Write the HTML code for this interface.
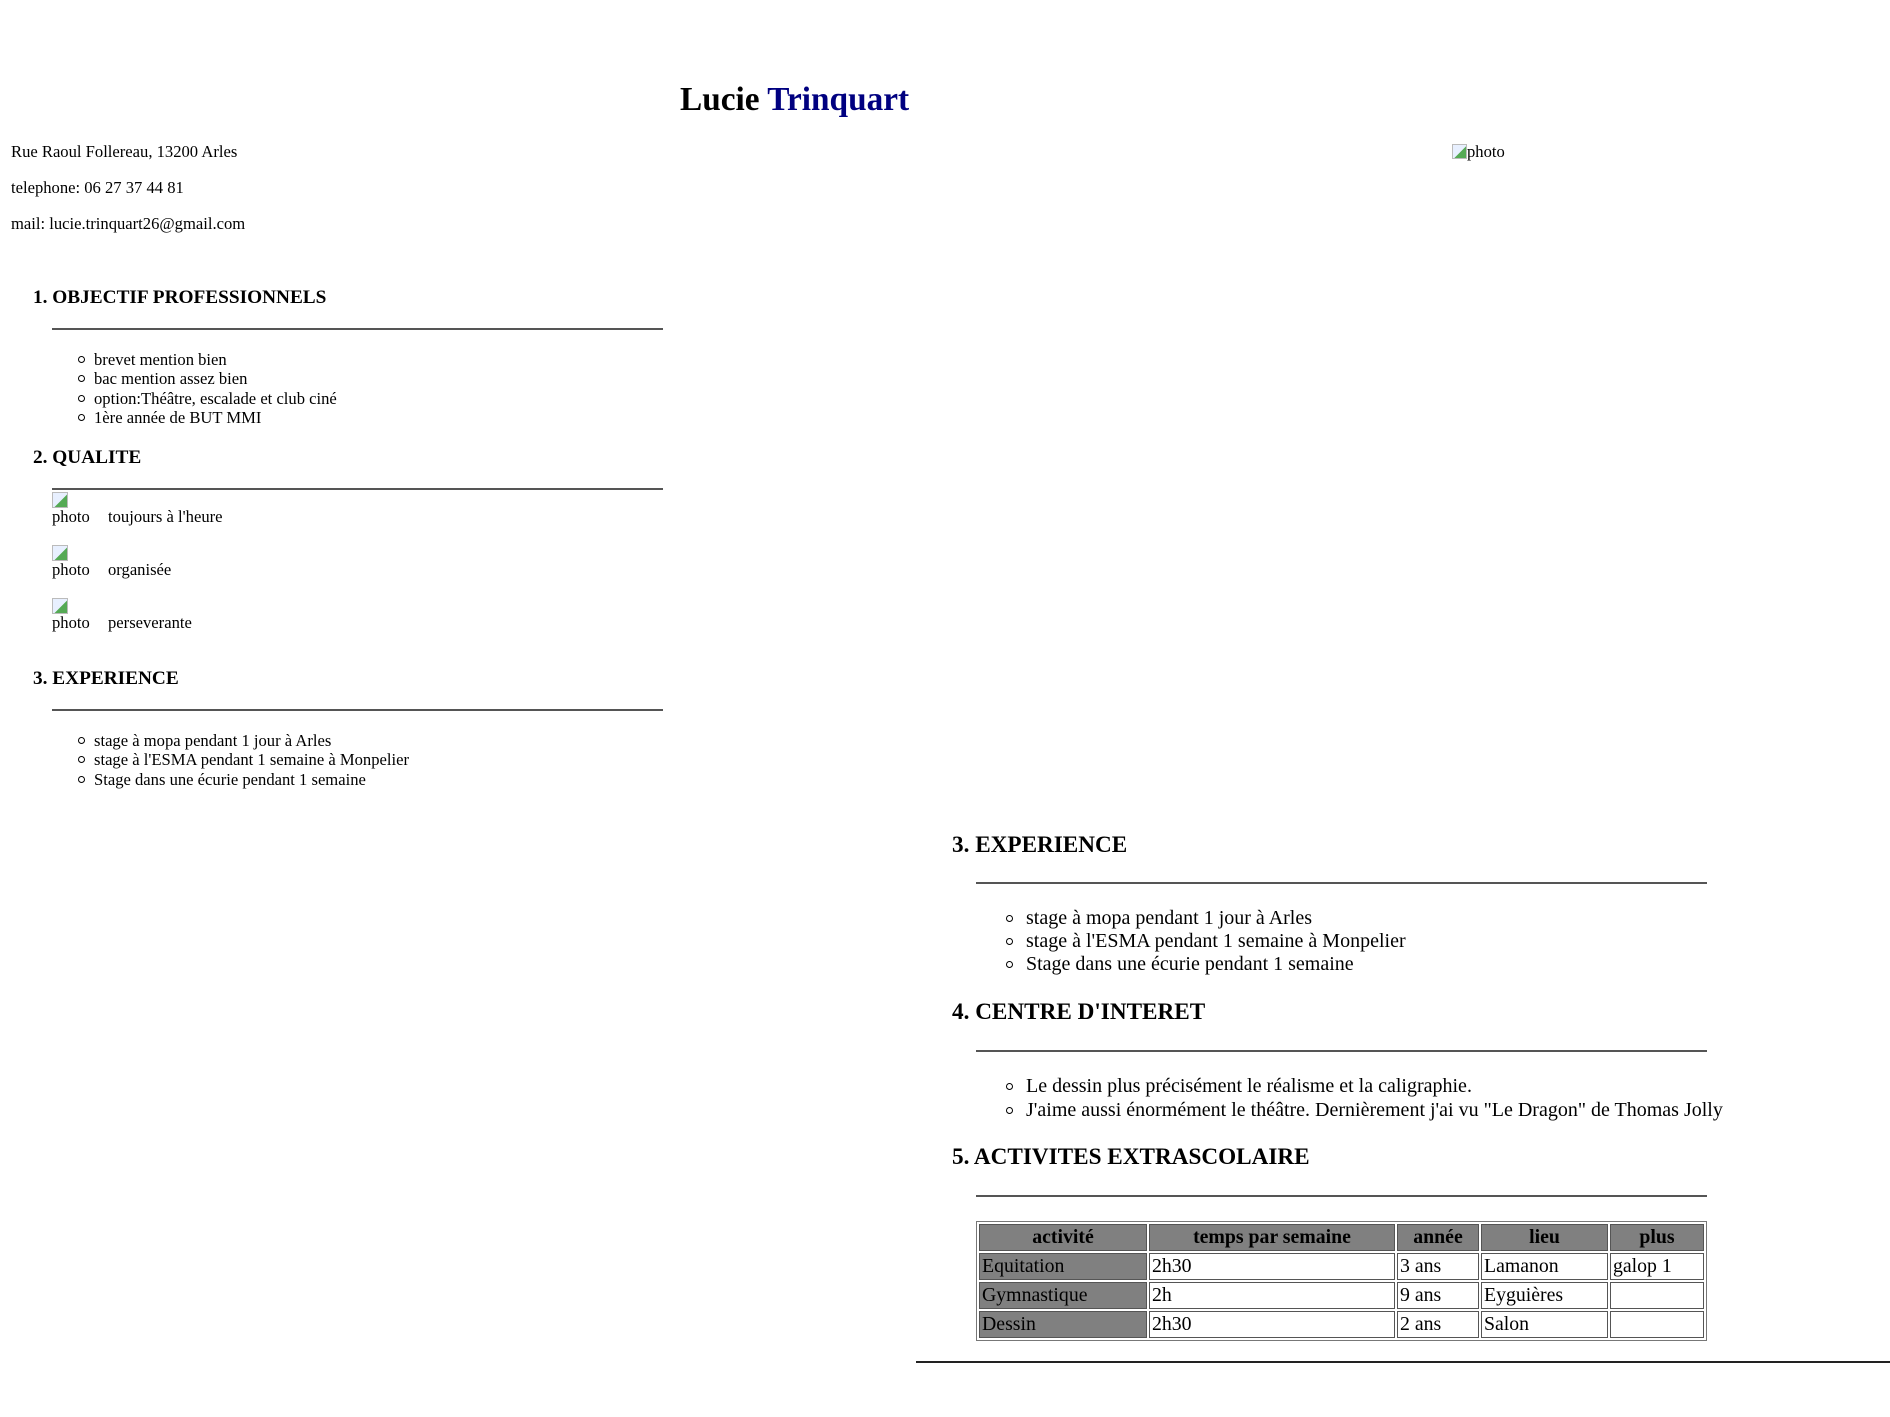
<!DOCTYPE html>
<html><head><meta charset="utf-8"><style>
body{margin:0;width:1890px;height:1417px;background:#fff;font-family:"Liberation Serif",serif;color:#000;position:relative;overflow:hidden}
.a{position:absolute;white-space:nowrap}
.s{font-size:16.6px;line-height:19.3px}
.h{font-size:19.3px;font-weight:bold}
.H{font-size:23.2px;font-weight:bold}
.r{font-size:20px;line-height:23px}
.hr{position:absolute;height:2px;background:#555}
.b{position:absolute;width:5px;height:5px;border:1.2px solid #000;border-radius:50%}
.ic{position:absolute;width:14px;height:14px;border:1px solid #bbb;background:linear-gradient(135deg,#e8f0ff 55%,#5a5 56%)}
table{position:absolute;left:976px;top:1221px;width:731px;border:1px solid #777;border-collapse:separate;border-spacing:2px;font-size:19.8px}
td,th{border:1px solid #555;padding:0 2px;height:25px;text-align:left}
th{background:#808080;text-align:center}
td.g{background:#808080}
</style></head><body>
<div class="a" style="left:680px;top:81px;font-size:33.3px;font-weight:bold">Lucie <span style="color:#000080">Trinquart</span></div>
<div class="a s" style="left:11px;top:142px">Rue Raoul Follereau, 13200 Arles</div>
<div class="a s" style="left:11px;top:178px">telephone: 06 27 37 44 81</div>
<div class="a s" style="left:11px;top:214px">mail: lucie.trinquart26@gmail.com</div>
<div class="a s" style="left:1452px;top:142px"><span class="ic" style="position:relative;display:inline-block;width:13px;height:13px;vertical-align:-2px"></span>photo</div>

<div class="a h" style="left:33px;top:287px">1. OBJECTIF PROFESSIONNELS</div>
<div class="hr" style="left:52px;top:328px;width:611px"></div>
<div class="b" style="left:78px;top:356px"></div><div class="a s" style="left:94px;top:350px">brevet mention bien</div>
<div class="b" style="left:78px;top:375px"></div><div class="a s" style="left:94px;top:369px">bac mention assez bien</div>
<div class="b" style="left:78px;top:395px"></div><div class="a s" style="left:94px;top:389px">option:Théâtre, escalade et club ciné</div>
<div class="b" style="left:78px;top:414px"></div><div class="a s" style="left:94px;top:408px">1ère année de BUT MMI</div>

<div class="a h" style="left:33px;top:447px">2. QUALITE</div>
<div class="hr" style="left:52px;top:488px;width:611px"></div>
<div class="ic" style="left:52px;top:492px"></div><div class="a s" style="left:52px;top:507px">photo</div><div class="a s" style="left:108px;top:507px">toujours à l'heure</div>
<div class="ic" style="left:52px;top:545px"></div><div class="a s" style="left:52px;top:560px">photo</div><div class="a s" style="left:108px;top:560px">organisée</div>
<div class="ic" style="left:52px;top:598px"></div><div class="a s" style="left:52px;top:613px">photo</div><div class="a s" style="left:108px;top:613px">perseverante</div>

<div class="a h" style="left:33px;top:668px">3. EXPERIENCE</div>
<div class="hr" style="left:52px;top:709px;width:611px"></div>
<div class="b" style="left:78px;top:737px"></div><div class="a s" style="left:94px;top:731px">stage à mopa pendant 1 jour à Arles</div>
<div class="b" style="left:78px;top:756px"></div><div class="a s" style="left:94px;top:750px">stage à l'ESMA pendant 1 semaine à Monpelier</div>
<div class="b" style="left:78px;top:776px"></div><div class="a s" style="left:94px;top:770px">Stage dans une écurie pendant 1 semaine</div>

<div class="a H" style="left:952px;top:832px">3. EXPERIENCE</div>
<div class="hr" style="left:976px;top:882px;width:731px"></div>
<div class="b" style="left:1006px;top:915px"></div><div class="a r" style="left:1026px;top:907px">stage à mopa pendant 1 jour à Arles</div>
<div class="b" style="left:1006px;top:938px"></div><div class="a r" style="left:1026px;top:930px">stage à l'ESMA pendant 1 semaine à Monpelier</div>
<div class="b" style="left:1006px;top:961px"></div><div class="a r" style="left:1026px;top:953px">Stage dans une écurie pendant 1 semaine</div>

<div class="a H" style="left:952px;top:999px">4. CENTRE D'INTERET</div>
<div class="hr" style="left:976px;top:1050px;width:731px"></div>
<div class="b" style="left:1006px;top:1083px"></div><div class="a r" style="left:1026px;top:1075px">Le dessin plus précisément le réalisme et la caligraphie.</div>
<div class="b" style="left:1006px;top:1107px"></div><div class="a r" style="left:1026px;top:1099px">J'aime aussi énormément le théâtre. Dernièrement j'ai vu "Le Dragon" de Thomas Jolly</div>

<div class="a H" style="left:952px;top:1144px">5. ACTIVITES EXTRASCOLAIRE</div>
<div class="hr" style="left:976px;top:1195px;width:731px"></div>
<table>
<tr><th style="width:162px">activité</th><th style="width:240px">temps par semaine</th><th style="width:76px">année</th><th style="width:121px">lieu</th><th>plus</th></tr>
<tr><td class="g">Equitation</td><td>2h30</td><td>3 ans</td><td>Lamanon</td><td>galop 1</td></tr>
<tr><td class="g">Gymnastique</td><td>2h</td><td>9 ans</td><td>Eyguières</td><td></td></tr>
<tr><td class="g">Dessin</td><td>2h30</td><td>2 ans</td><td>Salon</td><td></td></tr>
</table>
<div class="hr" style="left:916px;top:1361px;width:974px;height:2px;background:#222"></div>
</body></html>
